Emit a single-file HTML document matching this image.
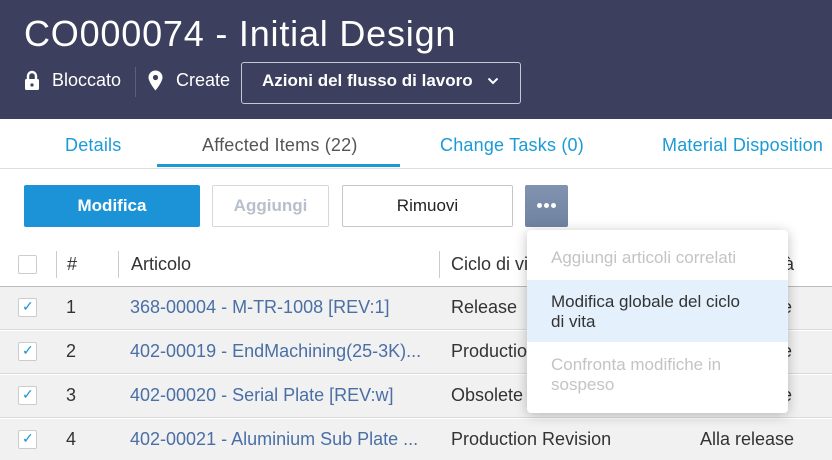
<!DOCTYPE html>
<html><head><meta charset="utf-8"><style>
*{margin:0;padding:0;box-sizing:border-box}
body{width:832px;height:460px;overflow:hidden;background:#fff;font-family:"Liberation Sans",sans-serif;position:relative}
.a{position:absolute;white-space:nowrap}
.hdr{left:0;top:0;width:832px;height:119px;background:#3c3f5d}
.row{left:0;width:832px;height:43px;background:#f1f1f1;border-bottom:1px solid #d9d9d9}
.cb{position:absolute;left:18px;width:19px;height:19px;border:1px solid #ccc;border-radius:2px;background:#fff}
.lnk{color:#4a6fa5;font-size:18px}
.txt{color:#333;font-size:18px}
.tab{font-size:18px;letter-spacing:0.2px}
</style></head><body>
<div class="a hdr"></div>
<div class="a" style="left:24px;top:13px;color:#fff;font-size:36px;letter-spacing:0.8px">CO000074 - Initial Design</div>
<svg class="a" style="left:24px;top:70px" width="16" height="20" viewBox="0 0 16 20"><path d="M4 9V6a4 4 0 0 1 8 0v3" fill="none" stroke="#fff" stroke-width="2.4"/><rect x="1" y="9" width="14" height="11" rx="1.5" fill="#fff"/><circle cx="8" cy="15" r="1.6" fill="#3c3f5d"/></svg>
<div class="a" style="left:52px;top:70px;color:#fff;font-size:18px">Bloccato</div>
<div class="a" style="left:135px;top:67px;width:1px;height:30px;background:#5d6079"></div>
<svg class="a" style="left:148px;top:70px" width="15" height="21" viewBox="0 0 15 21"><path d="M7.5 0.5A7 7 0 0 0 0.5 7.5C0.5 12 7.5 20.5 7.5 20.5S14.5 12 14.5 7.5A7 7 0 0 0 7.5 0.5Z" fill="#fff"/><circle cx="7.5" cy="7.5" r="2.6" fill="#3c3f5d"/></svg>
<div class="a" style="left:176px;top:70px;color:#fff;font-size:18px">Create</div>
<div class="a" style="left:241px;top:62px;width:280px;height:42px;border:1px solid #c5c7d2;border-radius:3px"></div>
<div class="a" style="left:262px;top:71px;color:#fff;font-size:17px;font-weight:bold">Azioni del flusso di lavoro</div>
<svg class="a" style="left:487px;top:77px" width="12" height="8" viewBox="0 0 12 8"><path d="M1.5 1.5l4.5 4.5 4.5-4.5" fill="none" stroke="#fff" stroke-width="2"/></svg>

<div class="a tab" style="left:65px;top:135px;color:#1a9bd7">Details</div>
<div class="a tab" style="left:202px;top:135px;color:#555">Affected Items (22)</div>
<div class="a tab" style="left:440px;top:135px;color:#1a9bd7">Change Tasks (0)</div>
<div class="a tab" style="left:662px;top:135px;color:#1a9bd7">Material Disposition</div>
<div class="a" style="left:0;top:168px;width:832px;height:1px;background:#ddd"></div>
<div class="a" style="left:157px;top:164px;width:243px;height:3px;background:#1a9bd7"></div>

<div class="a" style="left:24px;top:185px;width:176px;height:42px;background:#1b93d6;border-radius:2px;color:#fff;font-size:17px;font-weight:bold;text-align:center;line-height:42px">Modifica</div>
<div class="a" style="left:212px;top:185px;width:117px;height:42px;border:1px solid #d4d8de;border-radius:2px;color:#b8c0cb;font-size:17px;font-weight:bold;text-align:center;line-height:40px">Aggiungi</div>
<div class="a" style="left:342px;top:185px;width:171px;height:42px;border:1px solid #c6c6c6;border-radius:2px;color:#222;font-size:17px;text-align:center;line-height:40px">Rimuovi</div>
<div class="a" style="left:525px;top:185px;width:43px;height:42px;background:linear-gradient(#8193b0,#6f82a0);border-radius:2px"></div>
<div class="a" style="left:537px;top:203px;width:5px;height:5px;border-radius:50%;background:#fff;box-shadow:7px 0 #fff,14px 0 #fff"></div>

<div class="a cb" style="top:255px"></div>
<div class="a" style="left:56px;top:251px;width:1px;height:27px;background:#ccc"></div>
<div class="a txt" style="left:67px;top:254px">#</div>
<div class="a" style="left:118px;top:251px;width:1px;height:27px;background:#ccc"></div>
<div class="a txt" style="left:131px;top:254px">Articolo</div>
<div class="a" style="left:439px;top:251px;width:1px;height:27px;background:#ccc"></div>
<div class="a txt" style="left:451px;top:254px">Ciclo di vita</div>
<div class="a txt" style="left:775px;top:254px">ità</div>
<div class="a" style="left:0;top:286px;width:832px;height:1px;background:#bbb"></div>

<div class="a row" style="top:287px"></div>
<div class="a row" style="top:331px"></div>
<div class="a row" style="top:375px"></div>
<div class="a row" style="top:419px;height:41px;border:none"></div>

<div class="a cb" style="top:298px"></div><div class="a" style="left:22px;top:298px;color:#1b93d6;font-size:14px">✓</div>
<div class="a txt" style="left:66px;top:297px">1</div>
<div class="a lnk" style="left:130px;top:297px">368-00004 - M-TR-1008 [REV:1]</div>
<div class="a txt" style="left:451px;top:297px">Release</div>
<div class="a txt" style="left:782px;top:297px">e</div>

<div class="a cb" style="top:342px"></div><div class="a" style="left:22px;top:342px;color:#1b93d6;font-size:14px">✓</div>
<div class="a txt" style="left:66px;top:341px">2</div>
<div class="a lnk" style="left:130px;top:341px">402-00019 - EndMachining(25-3K)...</div>
<div class="a txt" style="left:451px;top:341px">Production</div>
<div class="a txt" style="left:782px;top:341px">e</div>

<div class="a cb" style="top:386px"></div><div class="a" style="left:22px;top:386px;color:#1b93d6;font-size:14px">✓</div>
<div class="a txt" style="left:66px;top:385px">3</div>
<div class="a lnk" style="left:130px;top:385px">402-00020 - Serial Plate [REV:w]</div>
<div class="a txt" style="left:451px;top:385px">Obsolete</div>
<div class="a txt" style="left:782px;top:385px">e</div>

<div class="a cb" style="top:430px"></div><div class="a" style="left:22px;top:430px;color:#1b93d6;font-size:14px">✓</div>
<div class="a txt" style="left:66px;top:429px">4</div>
<div class="a lnk" style="left:130px;top:429px">402-00021 - Aluminium Sub Plate ...</div>
<div class="a txt" style="left:451px;top:429px">Production Revision</div>
<div class="a txt" style="left:700px;top:429px">Alla release</div>

<div class="a" style="left:527px;top:230px;width:261px;height:183px;background:#fff;border-radius:4px;box-shadow:0 2px 12px rgba(0,0,0,0.25)"></div>
<div class="a" style="left:527px;top:280px;width:261px;height:62px;background:#e4f0fb"></div>
<div class="a" style="left:551px;top:248px;color:#c4c4c4;font-size:17px">Aggiungi articoli correlati</div>
<div class="a" style="left:551px;top:292px;color:#333;font-size:17px;line-height:20px">Modifica globale del ciclo<br>di vita</div>
<div class="a" style="left:551px;top:355px;color:#c4c4c4;font-size:17px;line-height:20px">Confronta modifiche in<br>sospeso</div>
</body></html>
